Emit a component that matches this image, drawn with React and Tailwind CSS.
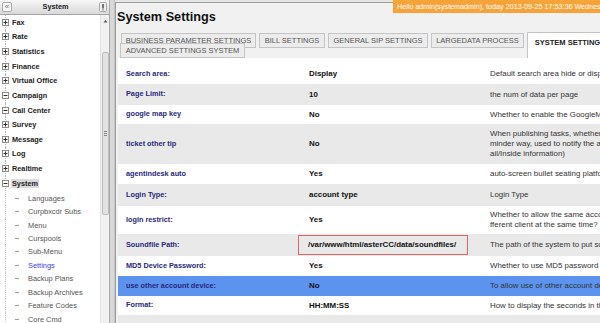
import React from 'react';

const parents = [
  { name: 'Fax' },
  { name: 'Rate' },
  { name: 'Statistics' },
  { name: 'Finance' },
  { name: 'Virtual Office' },
  { name: 'Campaign', open: true },
  { name: 'Call Center', open: true },
  { name: 'Survey' },
  { name: 'Message' },
  { name: 'Log' },
  { name: 'Realtime' },
  { name: 'System', open: true, selected: true },
];

const children = [
  'Languages', 'Curpbxcdr Subs', 'Menu', 'Curspools', 'Sub-Menu',
  'Settings', 'Backup Plans', 'Backup Archives', 'Feature Codes', 'Core Cmd',
];

const rows = [
  { label: 'Search area:', value: 'Display', desc: ['Default search area hide or display'], h: 'h-[20px]', bg: 'bg-white' },
  { label: 'Page Limit:', value: '10', desc: ['the num of data per page'], h: 'h-[21px]', bg: 'bg-[#e9e9e9]' },
  { label: 'google map key', value: 'No', desc: ['Whether to enable the GoogleMap'], h: 'h-[19px]', bg: 'bg-white' },
  {
    label: 'ticket other tip', value: 'No', h: 'h-[40px]', bg: 'bg-[#e9e9e9]',
    desc: ['When publishing tasks, whether to use the re', 'minder way, used to notify the agent(em', 'ail/Inside information)'],
  },
  { label: 'agentindesk auto', value: 'Yes', desc: ['auto-screen bullet seating platform'], h: 'h-[20px]', bg: 'bg-white' },
  { label: 'Login Type:', value: 'account type', desc: ['Login Type'], h: 'h-[22px]', bg: 'bg-[#e9e9e9]' },
  {
    label: 'login restrict:', value: 'Yes', h: 'h-[28px]', bg: 'bg-white',
    desc: ['Whether to allow the same account login on di', 'fferent client at the same time?'],
  },
  { label: 'Soundfile Path:', value: '/var/www/html/asterCC/data/soundfiles/', boxed: true, desc: ['The path of the system to put sound files'], h: 'h-[22px]', bg: 'bg-[#e9e9e9]' },
  { label: 'MD5 Device Password:', value: 'Yes', desc: ['Whether to use MD5 password'], h: 'h-[20px]', bg: 'bg-white' },
  { label: 'use other account device:', value: 'No', desc: ['To allow use of other account device'], h: 'h-[20px]', bg: 'bg-[#5b93ef]' },
  { label: 'Format:', value: 'HH:MM:SS', desc: ['How to display the seconds in the time'], h: 'h-[19px]', bg: 'bg-white' },
  { label: '', value: '', desc: [''], h: 'h-[20px]', bg: 'bg-[#e9e9e9]' },
];

const ToggleBox = ({ open }) => (
  <svg width="7" height="7" viewBox="0 0 7 7" className="relative">
    <rect x="0.5" y="0.5" width="6" height="6" fill="#fff" stroke="#8c8c8c" />
    <line x1="1.5" y1="3.5" x2="5.5" y2="3.5" stroke="#333" />
    {!open && <line x1="3.5" y1="1.5" x2="3.5" y2="5.5" stroke="#333" />}
  </svg>
);

const Sidebar = () => (
  <div className="flex flex-col shrink-0 w-[110px] h-full bg-white border-r border-[#a9a9a9]">
    {/* Header */}
    <div className="flex items-center justify-between h-[15px] px-[2px] border-b border-[#a5a5a5] bg-gradient-to-b from-[#f7f7f7] to-[#d9d9d9]">
      <div className="flex items-center justify-center w-[10px] h-[10px] rounded-[2px] border border-[#aaa] bg-[#f8f8f8] text-[8px] leading-[8px] text-[#666]">«</div>
      <span className="text-[7.3px] font-bold text-[#222]">System</span>
      <svg width="8" height="10" viewBox="0 0 8 10">
        <rect x="0.5" y="0.5" width="7" height="9" rx="1" fill="#ececec" stroke="#a8a8a8" />
        <rect x="3" y="2" width="2" height="4" fill="#777" />
        <line x1="4" y1="6" x2="4" y2="8.5" stroke="#777" />
      </svg>
    </div>

    <div className="flex flex-1 min-h-0">
      {/* Tree */}
      <div className="flex-1 overflow-hidden">
        {parents.map((p) => (
          <div key={p.name} className="flex items-center h-[14.64px]">
            <div className="relative flex items-center w-[10px] h-full pl-[2px]">
              <div className="absolute left-[5px] top-0 bottom-0 border-l border-dotted border-[#b5b5b5]" />
              <ToggleBox open={p.open} />
            </div>
            <span className={`ml-[1px] px-[1px] text-[7.3px] leading-[9px] font-bold text-[#222] ${p.selected ? 'bg-[#dadada]' : ''}`}>
              {p.name}
            </span>
          </div>
        ))}
        <div className="pt-[1px]">
          {children.map((c) => (
            <div key={c} className="flex items-center h-[13.44px]">
              <div className="relative w-[10px] h-full">
                <div className="absolute left-[5px] top-0 bottom-0 border-l border-dotted border-[#c8c8c8]" />
              </div>
              <span className="ml-[5px] w-[4px] border-t border-[#a0a0a0]" />
              <span className={`ml-[9px] text-[7.4px] whitespace-nowrap ${c === 'Settings' ? 'text-[#3b3bee]' : 'text-[#555]'}`}>
                {c}
              </span>
            </div>
          ))}
        </div>
      </div>

      {/* Scrollbar */}
      <div className="flex flex-col items-center w-[9px] bg-[#f1f1f1] border-l border-[#e0e0e0]">
        <svg width="7" height="12" viewBox="0 0 7 12">
          <path d="M1.5 7.5 L3.5 5 L5.5 7.5 Z" fill="#555" />
        </svg>
        <div className="mt-[25px] flex items-center justify-center w-[7px] h-[163px] rounded-[2px] border border-[#bdbdbd] bg-[#e2e2e2]">
          <div className="flex flex-col gap-[1px]">
            <span className="w-[3px] border-t border-[#888]" />
            <span className="w-[3px] border-t border-[#888]" />
            <span className="w-[3px] border-t border-[#888]" />
          </div>
        </div>
      </div>
    </div>
  </div>
);

const Tab = ({ children: label, w }) => (
  <div className={`flex shrink-0 items-center justify-center ${w} h-[15px] border border-[#c4c4c4] bg-[#ececec] text-[7.5px] text-[#555] whitespace-nowrap overflow-hidden`}>
    {label}
  </div>
);

const Main = () => (
  <div className="flex flex-col flex-1 min-w-0 mt-[2px] border-l border-t border-[#9c9c9c] bg-[#f1f1f1] overflow-hidden">
    <div className="h-[30px] pl-[1px] pt-[7px]">
      <h1 className="text-[12.7px] leading-[15px] font-bold text-[#111]">System Settings</h1>
    </div>

    {/* Tabs */}
    <div className="flex items-start gap-[3px] h-[25px] pl-[5px]">
      <Tab w="w-[135px]">BUSINESS PARAMETER SETTINGS</Tab>
      <Tab w="w-[66px]">BILL SETTINGS</Tab>
      <Tab w="w-[100px]">GENERAL SIP SETTINGS</Tab>
      <Tab w="w-[93px]">LARGEDATA PROCESS</Tab>
      <div className="flex shrink-0 justify-center w-[86px] h-[26px] -mt-[1px] pt-[4px] border-t border-l border-r border-[#c4c4c4] bg-white text-[7.5px] font-bold text-[#222] whitespace-nowrap">
        SYSTEM SETTINGS
      </div>
    </div>
    <div className="relative -mt-[15px] pl-[4px]">
      <Tab w="w-[125px]">ADVANCED SETTINGS SYSTEM</Tab>
    </div>

    {/* Settings table */}
    <div className="flex-1 ml-[2px] pt-[6px] bg-white overflow-hidden">
      <div className="w-[720px]">
        {rows.map((r, i) => (
          <div key={i} className={`flex items-center ${r.h} ${r.bg}`}>
            <div className="w-[180px] shrink-0 pl-[8px] text-[7.3px] font-bold text-[#28287c] whitespace-nowrap">{r.label}</div>
            <div className="w-[185px] shrink-0">
              {r.boxed ? (
                <div className="flex items-center w-[170px] h-[20px] pl-[9px] border border-[#e06565] text-[7.9px] font-bold text-[#111] whitespace-nowrap">
                  {r.value}
                </div>
              ) : (
                <div className="pl-[11px] text-[7.9px] font-bold text-[#111] whitespace-nowrap">{r.value}</div>
              )}
            </div>
            <div className="flex-1 pl-[7px] text-[7.9px] leading-[10px] text-[#333]">
              {r.desc.map((d, j) => (
                <div key={j} className="whitespace-nowrap">{d}</div>
              ))}
            </div>
          </div>
        ))}
      </div>
    </div>
  </div>
);

export default function App() {
  return (
    <div className="relative flex w-[600px] h-[323px] overflow-hidden bg-[#e6e6e6] font-['Liberation_Sans',Arial,sans-serif]">
      <Sidebar />
      <div className="w-[5px] shrink-0 bg-[#d8d8d8] border-r border-[#c4c4c4]" />
      <Main />

      {/* Greeting banner */}
      <div className="absolute top-0 left-[393px] right-0 h-[13px] pl-[4px] bg-[#f6a33a] text-[7.2px] leading-[13px] text-white whitespace-nowrap overflow-hidden">
        Hello admin(systemadmin), today 2013-09-25 17:53:36 Wednesday
      </div>
    </div>
  );
}
